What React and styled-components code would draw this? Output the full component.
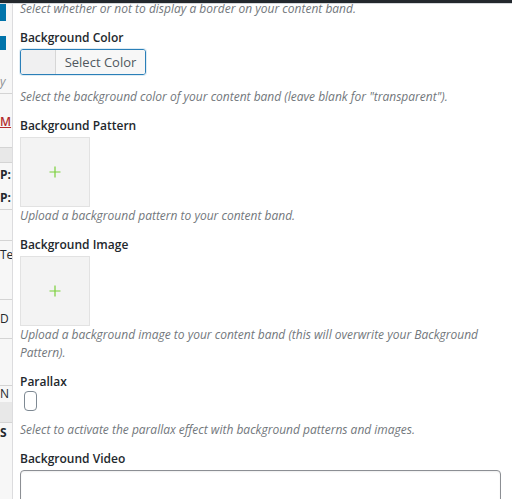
import React from 'react';
import styled, { createGlobalStyle } from 'styled-components';

const GlobalStyle = createGlobalStyle`
  html, body {
    margin: 0;
    padding: 0;
    background: #ffffff;
    overflow: hidden;
  }
  body {
    font-family: "Open Sans", "Noto Sans", sans-serif;
  }
`;

const Screen = styled.div`
  display: flex;
  flex-direction: column;
  width: 512px;
  height: 499px;
  overflow: hidden;
`;

const TopBar = styled.div`
  height: 3px;
  flex-shrink: 0;
  background: #23282d;
  border-bottom: 1px solid #d5d8dc;
`;

const Body = styled.div`
  display: flex;
  flex: 1;
  min-height: 0;
`;

// admin page peeking out behind the modal
const Backdrop = styled.div`
  width: 12px;
  flex-shrink: 0;
  display: flex;
  flex-direction: column;
  overflow: hidden;
  background: #f7f7f7;
  border-right: 1px solid #dcdcde;
`;

const Strip = styled.div`
  height: ${(props) => props.h}px;
  flex-shrink: 0;
  background: ${(props) => props.bg || 'transparent'};
  border-bottom: ${(props) => (props.line ? '1px solid #d4d4d4' : 'none')};
  font-size: 12px;
  line-height: ${(props) => props.h}px;
  white-space: nowrap;
  color: ${(props) => props.color || '#23282d'};
  font-weight: ${(props) => props.weight || 400};
  font-style: ${(props) => (props.italic ? 'italic' : 'normal')};
  text-decoration: ${(props) => (props.under ? 'underline' : 'none')};
  overflow: hidden;
`;

const BlueTab = styled.div`
  height: ${(props) => props.h}px;
  width: 6px;
  background: #0073aa;
  flex-shrink: 0;
`;

const Modal = styled.div`
  flex: 1;
  min-width: 0;
  background: #ffffff;
  padding: 0 11px 0 7px;
  overflow: hidden;
`;

const Form = styled.div`
  display: flex;
  flex-direction: column;
  gap: 11px;
  margin-top: -4px;
`;

const Field = styled.div`
  display: flex;
  flex-direction: column;
  align-items: flex-start;
`;

const Label = styled.div`
  font-size: 12px;
  line-height: 18px;
  font-weight: 600;
  color: #23282d;
  margin-bottom: 2px;
`;

const Desc = styled.div`
  font-size: 12px;
  line-height: 18px;
  font-style: italic;
  color: #72777c;
  margin-top: ${(props) => props.gap || 0}px;
`;

const ColorButton = styled.div`
  display: flex;
  height: 26px;
  width: 126px;
  box-sizing: border-box;
  border: 1px solid #2a7fb8;
  border-radius: 3px;
  overflow: hidden;
  box-shadow: 0 0 0 1px rgba(42, 127, 184, 0.15);
`;

const Swatch = styled.span`
  width: 34px;
  background: #f0f0f1;
  border-right: 1px solid #d6d6d6;
`;

const ButtonText = styled.span`
  flex: 1;
  display: flex;
  align-items: center;
  justify-content: center;
  background: #f7f7f7;
  font-size: 13px;
  color: #50575e;
`;

const UploadBox = styled.div`
  width: 70px;
  height: 70px;
  box-sizing: border-box;
  background: #f3f3f3;
  border: 1px solid #e2e2e2;
  display: flex;
  align-items: center;
  justify-content: center;
`;

const Checkbox = styled.span`
  display: block;
  width: 13px;
  height: 20px;
  margin: -2px 0 0 4px;
  box-sizing: border-box;
  border: 1px solid #7e8993;
  border-radius: 4px;
  background: #ffffff;
`;

const TextArea = styled.div`
  width: 100%;
  height: 40px;
  box-sizing: border-box;
  border: 1px solid #8c8f94;
  border-radius: 4px;
  box-shadow: inset 0 1px 2px rgba(0, 0, 0, 0.07);
`;

const Plus = () => (
  <svg width="12" height="12" viewBox="0 0 12 12">
    <path d="M6 0.5v11M0.5 6h11" stroke="#7ad03a" strokeWidth="1.2" fill="none" />
  </svg>
);

const App = () => {
  return (
    <Screen>
      <GlobalStyle />
      <TopBar />
      <Body>
        <Backdrop>
          <BlueTab h={17} />
          <Strip h={15} />
          <BlueTab h={14} />
          <Strip h={21} />
          <Strip h={22} italic color="#8c8f94" line>y</Strip>
          <Strip h={20} />
          <Strip h={16} color="#b32d2e" under weight={600}>M</Strip>
          <Strip h={17} line />
          <Strip h={14} bg="#e8e8e8" line />
          <Strip h={24} weight={700}>P:</Strip>
          <Strip h={22} line weight={700}>P:</Strip>
          <Strip h={30} line />
          <Strip h={28}>Te</Strip>
          <Strip h={30} line />
          <Strip h={38} line>D</Strip>
          <Strip h={46} line />
          <Strip h={16}>N</Strip>
          <Strip h={20} bg="#e8e8e8" line />
          <Strip h={20} weight={700}>S</Strip>
        </Backdrop>
        <Modal>
          <Form>
            <Field>
              <Desc>Select whether or not to display a border on your content band.</Desc>
            </Field>
            <Field>
              <Label>Background Color</Label>
              <ColorButton>
                <Swatch />
                <ButtonText>Select Color</ButtonText>
              </ColorButton>
              <Desc gap={13}>Select the background color of your content band (leave blank for "transparent").</Desc>
            </Field>
            <Field>
              <Label>Background Pattern</Label>
              <UploadBox>
                <Plus />
              </UploadBox>
              <Desc>Upload a background pattern to your content band.</Desc>
            </Field>
            <Field>
              <Label>Background Image</Label>
              <UploadBox>
                <Plus />
              </UploadBox>
              <Desc>Upload a background image to your content band (this will overwrite your Background Pattern).</Desc>
            </Field>
            <Field>
              <Label>Parallax</Label>
              <Checkbox />
              <Desc gap={10}>Select to activate the parallax effect with background patterns and images.</Desc>
            </Field>
            <Field>
              <Label>Background Video</Label>
              <TextArea />
            </Field>
          </Form>
        </Modal>
      </Body>
    </Screen>
  );
};

export default App;
